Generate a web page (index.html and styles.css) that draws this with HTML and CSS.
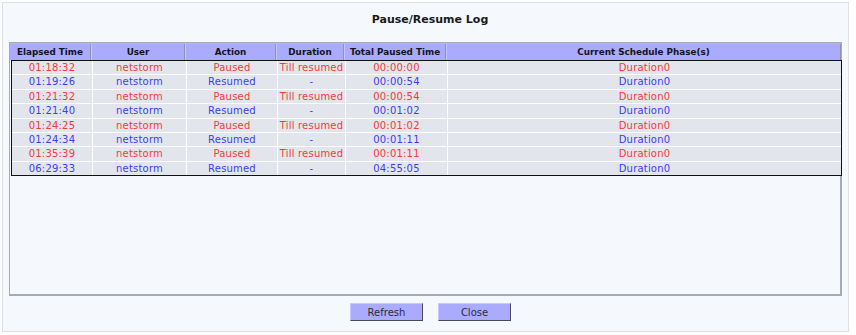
FILE: index.html
```html
<!DOCTYPE html>
<html>
<head>
<meta charset="utf-8">
<link rel="stylesheet" href="styles.css">
</head>
<body>
<div class="panel">
  <h1 class="title">Pause/Resume Log</h1>
  <div class="box">
    <div class="grid head">
      <div class="hc">Elapsed Time</div>
      <div class="hc">User</div>
      <div class="hc">Action</div>
      <div class="hc">Duration</div>
      <div class="hc">Total Paused Time</div>
      <div class="hc">Current Schedule Phase(s)</div>
    </div>
    <div class="body">
      <div class="grid row paused"><div>01:18:32</div><div>netstorm</div><div>Paused</div><div>Till resumed</div><div>00:00:00</div><div>Duration0</div></div>
      <div class="grid row resumed"><div>01:19:26</div><div>netstorm</div><div>Resumed</div><div>-</div><div>00:00:54</div><div>Duration0</div></div>
      <div class="grid row paused"><div>01:21:32</div><div>netstorm</div><div>Paused</div><div>Till resumed</div><div>00:00:54</div><div>Duration0</div></div>
      <div class="grid row resumed"><div>01:21:40</div><div>netstorm</div><div>Resumed</div><div>-</div><div>00:01:02</div><div>Duration0</div></div>
      <div class="grid row paused"><div>01:24:25</div><div>netstorm</div><div>Paused</div><div>Till resumed</div><div>00:01:02</div><div>Duration0</div></div>
      <div class="grid row resumed"><div>01:24:34</div><div>netstorm</div><div>Resumed</div><div>-</div><div>00:01:11</div><div>Duration0</div></div>
      <div class="grid row paused"><div>01:35:39</div><div>netstorm</div><div>Paused</div><div>Till resumed</div><div>00:01:11</div><div>Duration0</div></div>
      <div class="grid row resumed"><div>06:29:33</div><div>netstorm</div><div>Resumed</div><div>-</div><div>04:55:05</div><div>Duration0</div></div>
    </div>
  </div>
  <div class="actions">
    <button class="btn">Refresh</button>
    <button class="btn">Close</button>
  </div>
</div>
</body>
</html>
```
FILE: styles.css
```css
html, body {
  margin: 0;
  background: #ffffff;
}
body {
  font-family: "DejaVu Sans", Verdana, sans-serif;
  font-size: 10px;
  color: #222;
}
.panel {
  margin: 2px 0 0 2px;
  width: 847px;
  height: 330px;
  box-sizing: border-box;
  border: 1px solid #dde1e7;
  background: #f5f8fd;
  padding: 10px 0 0 6px;
}
.title {
  margin: 0 0 15px 0;
  padding-left: 3px;
  font-size: 11px;
  line-height: 14px;
  font-weight: bold;
  text-align: center;
  color: #1a1a1a;
}
.box {
  width: 833px;
  height: 254px;
  box-sizing: border-box;
  border: 1px solid #a4abb6;
  border-right: 2px solid #a4abb6;
  border-bottom: 2px solid #a4abb6;
}
.grid {
  display: grid;
  grid-template-columns: 81px 94px 91px 68px 102px 1fr;
}
.head {
  height: 16px;
  background: #aaaaff;
  border-top: 1px solid #b6bcc6;
  margin-right: -1px;
}
.hc {
  font-weight: bold;
  text-align: center;
  line-height: 16px;
  font-size: 8.8px;
  color: #141420;
  border-right: 1px solid #8e93a6;
  border-left: 1px solid #c4c4ff;
}
.hc:first-child {
  border-left: none;
}
.body {
  margin-left: 1px;
  border: 1px solid #111;
  background: #ffffff;
  display: flex;
  flex-direction: column;
  gap: 1px;
  width: 829px;
}
.row {
  height: 13.4px;
  grid-template-columns: 80px 94px 91px 68px 102px 1fr;
}
.row > div {
  background: #e2e6ec;
  text-align: center;
  line-height: 13px;
  letter-spacing: 0.2px;
  border-left: 1px solid #ffffff;
}
.row > div:first-child {
  border-left: none;
}
.paused { color: #f23a3a; }
.resumed { color: #3d3df0; }
.actions {
  display: flex;
  justify-content: center;
  gap: 15px;
  margin-top: 7px;
  padding-left: 4px;
}
.btn {
  width: 73px;
  height: 18px;
  box-sizing: border-box;
  background: #aaaaff;
  border: 1px solid;
  border-color: #c8c8ff #4a4a5a #4a4a5a #c8c8ff;
  font-family: "DejaVu Sans", Verdana, sans-serif;
  font-size: 10px;
  color: #2a2a3a;
  padding: 0;
}
```
